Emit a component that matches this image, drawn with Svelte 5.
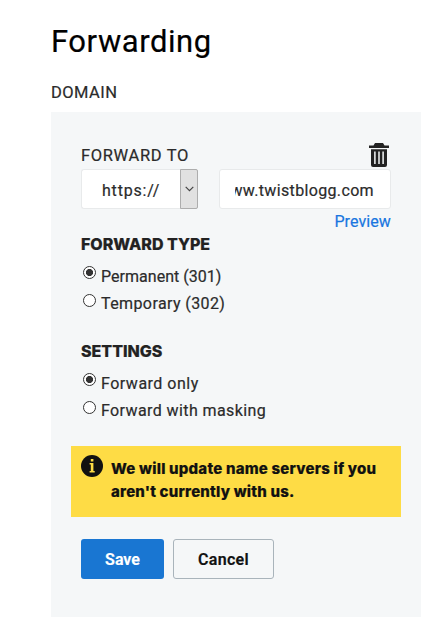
<script>
  let type = $state('permanent');
  let setting = $state('only');
  const types = [
    { id: 'permanent', label: 'Permanent (301)', ls: 0.03 },
    { id: 'temporary', label: 'Temporary (302)', ls: 0.4 }
  ];
  const settings = [
    { id: 'only', label: 'Forward only', ls: 0.5 },
    { id: 'masking', label: 'Forward with masking', ls: 0.4 }
  ];
</script>

<main>
  <h1><span>Forwarding</span></h1>
  <div class="domain"><span>DOMAIN</span></div>
  <section class="panel">
    <div class="head">
      <span class="fwd">FORWARD TO</span>
      <button class="trash" aria-label="Delete">
        <svg width="20" height="24" viewBox="0 0 20 24">
          <path fill="#222" d="M0 2.5h4.5L6 0h8l1.5 2.5H20V5H0zM2 6.2h16V22a2 2 0 0 1-2 2H4a2 2 0 0 1-2-2z" />
          <path stroke="#f5f7f8" stroke-width="1.5" d="M5.9 8.5v12.5M10 8.5v12.5M14.1 8.5v12.5" />
        </svg>
      </button>
    </div>
    <div class="fields">
      <div class="select">
        <span class="proto">https://</span>
        <span class="arrow">
          <svg width="9" height="6" viewBox="0 0 9 6"><path fill="none" stroke="#444" stroke-width="1.2" d="M.7.8l3.8 3.8L8.3.8" /></svg>
        </span>
      </div>
      <div class="input"><div class="clip"><span class="url">www.twistblogg.com</span></div></div>
    </div>
    <div class="preview"><span>Preview</span></div>

    <div class="legend ft"><span>FORWARD TYPE</span></div>
    <div class="group">
      {#each types as t}
        <label>
          <input type="radio" name="type" value={t.id} bind:group={type} />
          <span style="letter-spacing:{t.ls}px">{t.label}</span>
        </label>
      {/each}
    </div>
    <div class="legend st"><span>SETTINGS</span></div>
    <div class="group">
      {#each settings as s}
        <label>
          <input type="radio" name="setting" value={s.id} bind:group={setting} />
          <span style="letter-spacing:{s.ls}px">{s.label}</span>
        </label>
      {/each}
    </div>

    <div class="alert">
      <svg width="22" height="22" viewBox="0 0 22 22">
        <circle cx="11" cy="11" r="11" fill="#111" />
        <path fill="#fedc45" d="M9.8 4h2.6v2.4H9.8zM8.6 8h3.8v8h1.3v1.4H8.6V16h1.2V9.4H8.6z" />
      </svg>
      <p><span class="l1">We will update name servers if you</span><br /><span class="l2">aren't currently with us.</span></p>
    </div>

    <div class="actions">
      <button class="btn save"><span>Save</span></button>
      <button class="btn cancel"><span>Cancel</span></button>
    </div>
  </section>
</main>

<style>
  :global(body) { background: #fff; }
  main {
    box-sizing: border-box;
    width: 433px;
    height: 617px;
    padding: 22px 12px 0 51px;
    overflow: hidden;
    font-family: Roboto, 'Liberation Sans', sans-serif;
    font-size: 16px;
    color: #2b2b2b;
    white-space: nowrap;
    -webkit-text-stroke: 0.2px currentColor;
  }
  button { font: inherit; padding: 0; margin: 0; }
  h1 { margin: 0; font-size: 31px; font-weight: 400; line-height: 40px; color: #000; letter-spacing: 0.55px; }
  .domain { margin-top: 20px; height: 30px; line-height: 22px; font-size: 16.5px; letter-spacing: 0.45px; }
  .panel { box-sizing: border-box; width: 370px; height: 505px; background: #f5f7f8; padding: 30px 30px 0; }
  .head { display: flex; justify-content: space-between; height: 27px; line-height: 27px; }
  .fwd { font-size: 16.5px; letter-spacing: 0.65px; }
  .trash { border: 0; background: none; height: 24px; margin: 1px 2px 0 0; line-height: 0; }
  .fields { display: flex; justify-content: space-between; height: 40px; }
  .select, .input { box-sizing: border-box; border: 1px solid #e8eaeb; border-radius: 3px; background: #fff; display: flex; align-items: center; }
  .select { width: 117px; justify-content: space-between; padding-left: 20px; border-right: 0; }
  .proto { padding-top: 2px; letter-spacing: 0.8px; }
  .arrow { box-sizing: border-box; width: 18px; height: 40px; margin: -1px 0; border: 1px solid #adadad; background: #e1e1e1; display: flex; align-items: center; justify-content: center; border-radius: 0 2px 2px 0; }
  .input { width: 172px; padding: 2px 16px 0 15px; }
  .clip { display: flex; justify-content: flex-end; overflow: hidden; width: 100%; }
  .url { letter-spacing: 0.35px; }
  .preview { height: 24px; line-height: 26px; text-align: right; color: #1976e0; letter-spacing: 0.1px; }
  .legend { height: 22px; line-height: 22px; font-weight: 800; color: #222; font-family: Inter, sans-serif; font-size: 16px; }
  .group { padding-top: 7px; }
  .group + .legend { margin-top: 24px; }
  label { display: flex; height: 27px; line-height: 29px; }
  input[type='radio'] { appearance: none; box-sizing: border-box; width: 13px; height: 13px; margin: 4px 5px 0 2px; border: 1px solid #333; border-radius: 50%; background: #fff; }
  label + label input[type='radio'] { margin-top: 5px; }
  input[type='radio']:checked { background: radial-gradient(circle, #333 0 3.2px, #fff 3.9px); }
  .alert { box-sizing: border-box; display: flex; gap: 8px; width: 330px; height: 71px; margin: 23px -10px 0; padding: 9px 10px 0; background: #fedc45; color: #111; }
  .alert p { margin: 2px 0 0; line-height: 23px; font-weight: 800; font-family: Inter, sans-serif; font-size: 15px; letter-spacing: 0.21px; }
  .actions { display: flex; gap: 9px; margin-top: 22px; }
  .btn { box-sizing: border-box; height: 40px; border-radius: 3px; font-weight: 600; }
  .save { width: 83px; border: 0; background: #1976d2; color: #fff; }
  .cancel { width: 101px; border: 1px solid #a9b4bb; background: transparent; color: #111; letter-spacing: 0.3px; }
</style>
